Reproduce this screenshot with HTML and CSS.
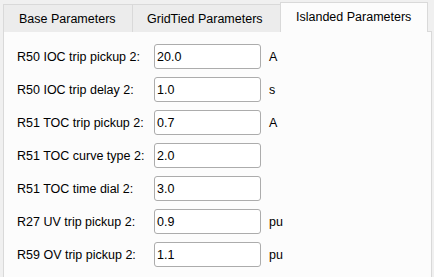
FILE: index.html
```html
<!DOCTYPE html>
<html>
<head>
<meta charset="utf-8">
<link rel="stylesheet" href="styles.css">
</head>
<body>
<div class="tabwidget">
  <div class="tabbar">
    <div class="tab tab-base">Base Parameters</div>
    <div class="tab tab-grid">GridTied Parameters</div>
    <div class="tab tab-island selected">Islanded Parameters</div>
  </div>
  <div class="pane">
    <div class="form">
      <div class="label">R50 IOC trip pickup 2:</div><div class="field">20.0</div><div class="unit">A</div>
      <div class="label">R50 IOC trip delay 2:</div><div class="field">1.0</div><div class="unit">s</div>
      <div class="label">R51 TOC trip pickup 2:</div><div class="field">0.7</div><div class="unit">A</div>
      <div class="label">R51 TOC curve type 2:</div><div class="field">2.0</div><div class="unit"></div>
      <div class="label">R51 TOC time dial 2:</div><div class="field">3.0</div><div class="unit"></div>
      <div class="label">R27 UV trip pickup 2:</div><div class="field">0.9</div><div class="unit">pu</div>
      <div class="label">R59 OV trip pickup 2:</div><div class="field">1.1</div><div class="unit">pu</div>
    </div>
  </div>
</div>
</body>
</html>
```
FILE: styles.css
```css
* { box-sizing: border-box; }
html, body {
  margin: 0;
  padding: 0;
  background: #f0f0f0;
  width: 434px;
  height: 277px;
  overflow: hidden;
  font-family: "Liberation Sans", Arial, sans-serif;
  font-size: 12.5px;
  color: #000;
}
.tabwidget {
  display: flex;
  flex-direction: column;
  height: 277px;
  padding-left: 3px;
}
.tabbar {
  display: flex;
  align-items: flex-end;
  height: 32px;
  position: relative;
  z-index: 1;
}
.tab {
  height: 28px;
  background: #ececec;
  border: 1px solid #d9d9d9;
  border-bottom: none;
  display: flex;
  align-items: center;
  padding-top: 1px;
  padding-left: 15px;
  white-space: nowrap;
}
.tab-base { width: 130px; }
.tab-grid { width: 148px; border-left: none; padding-left: 14px; }
.tab-island { width: 148px; margin-left: -1px; }
.tab.selected {
  height: 30px;
  background: #fcfcfc;
  padding-top: 0;
  padding-bottom: 1px;
  padding-left: 15px;
}
.pane {
  flex: 1;
  width: 429px;
  margin-top: -1px;
  background: #fcfcfc;
  border: 1px solid #d9d9d9;
  border-bottom: none;
  padding: 12px 0 0 13px;
}
.form {
  display: grid;
  grid-template-columns: 137px 107px auto;
  grid-auto-rows: 25px;
  row-gap: 8px;
  align-items: center;
}
.label { padding-top: 1px; }
.field {
  height: 25px;
  border: 1px solid #acacac;
  border-radius: 3px;
  background: #ffffff;
  padding-left: 2px;
  padding-top: 1px;
  display: flex;
  align-items: center;
}
.unit { padding-left: 8px; padding-top: 1px; }
```
